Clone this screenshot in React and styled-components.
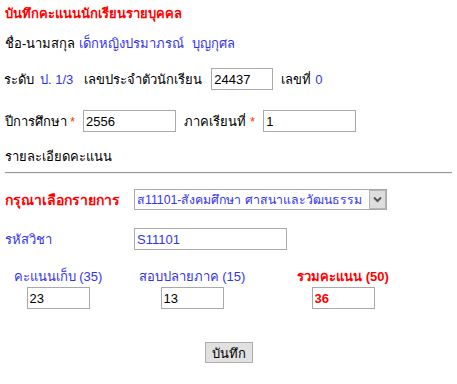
import React from "react";
import styled, { createGlobalStyle } from "styled-components";

const FONT = `Tahoma, "Liberation Sans", "Noto Sans", sans-serif`;
const BLUE = "#3333ee";

const Global = createGlobalStyle`
  html, body { margin: 0; padding: 0; background: #fff; }
  body { font-family: ${FONT}; font-size: 13px; color: #000; }
`;

const Page = styled.div`
  width: 457px;
  height: 384px;
  padding: 0 5px 0 5px;
  box-sizing: border-box;
  display: flex;
  flex-direction: column;
`;

const Title = styled.div`
  color: #ff0000;
  font-weight: bold;
  font-size: 13px;
  height: 26px;
  display: flex;
  align-items: center;
`;

const Row = styled.div`
  display: flex;
  align-items: center;
  height: ${(p) => p.$h || 22}px;
  margin-top: ${(p) => p.$mt || 0}px;
  margin-left: ${(p) => p.$ml || 0}px;
`;

const Label = styled.span`
  color: ${(p) => p.$color || "#000"};
  font-weight: ${(p) => (p.$bold ? "bold" : "normal")};
  font-size: ${(p) => p.$size || 13}px;
  margin-left: ${(p) => p.$ml || 0}px;
  min-width: ${(p) => p.$minw || 0}px;
  white-space: pre;
`;

const Value = styled.span`
  color: ${BLUE};
  margin-left: ${(p) => p.$ml || 0}px;
  white-space: pre;
`;

const Star = styled.span`
  color: #ff3300;
  margin-left: ${(p) => p.$ml || 0}px;
`;

const TextInput = styled.input`
  box-sizing: border-box;
  width: ${(p) => p.$w}px;
  height: 22px;
  border: 1px solid #a9a9a9;
  padding: 0 2px;
  margin: 0 0 0 ${(p) => p.$ml || 0}px;
  font-family: ${FONT};
  font-size: 13px;
  color: ${(p) => p.$color || "#000"};
  font-weight: ${(p) => (p.$bold ? "bold" : "normal")};
  background: #fff;
  outline: none;
`;

const Rule = styled.hr`
  margin: 6px 0 0 0;
  border: none;
  border-top: 1px solid #9a9a9a;
  border-bottom: 1px solid #eeeeee;
  height: 0;
`;

const SelectWrap = styled.div`
  position: relative;
  width: 253px;
  height: 21px;
`;

const Select = styled.select`
  appearance: none;
  box-sizing: border-box;
  width: 100%;
  height: 100%;
  border: 1px solid #a9a9a9;
  padding: 0 2px;
  margin: 0;
  font-family: ${FONT};
  font-size: 12.3px;
  color: ${BLUE};
  background: #fff;
  outline: none;
`;

const ArrowBox = styled.div`
  position: absolute;
  top: 1px;
  right: 1px;
  width: 17px;
  height: 19px;
  box-sizing: border-box;
  background: #dedede;
  border: 1px solid #b4b4b4;
  display: flex;
  align-items: center;
  justify-content: center;
  pointer-events: none;
`;

const ScoreGrid = styled.div`
  display: grid;
  grid-template-columns: 106px 162px 140px;
  margin-top: 18px;
`;

const ScoreCell = styled.div`
  display: flex;
  flex-direction: column;
  align-items: center;
  gap: 1px;
`;

const ScoreLabel = styled.div`
  color: ${(p) => p.$color || BLUE};
  font-weight: ${(p) => (p.$bold ? "bold" : "normal")};
  height: 18px;
  line-height: 18px;
  white-space: pre;
`;

const ButtonRow = styled.div`
  display: flex;
  justify-content: center;
  margin-top: 33px;
`;

const Button = styled.button`
  box-sizing: border-box;
  height: 21px;
  padding: 0 6px;
  background: #e1e1e1;
  border: 1px solid #adadad;
  font-family: ${FONT};
  font-size: 13px;
  color: #000;
`;

export default function App() {
  return (
    <>
      <Global />
      <Page>
        <Title>บันทึกคะแนนนักเรียนรายบุคคล</Title>
        <Row $mt={6}>
          <Label>ชื่อ-นามสกุล</Label>
          <Value $ml={4}>เด็กหญิงปรมาภรณ์  บุญกุศล</Value>
        </Row>
        <Row $mt={14} $ml={-1}>
          <Label>ระดับ</Label>
          <Value $ml={6}>ป. 1/3</Value>
          <Label $ml={11}>เลขประจำตัวนักเรียน</Label>
          <TextInput $ml={9} $w={62} defaultValue="24437" readOnly />
          <Label $ml={8}>เลขที่</Label>
          <Value $ml={4}>0</Value>
        </Row>
        <Row $mt={20}>
          <Label>ปีการศึกษา</Label>
          <Star $ml={3}>*</Star>
          <TextInput $ml={8} $w={93} defaultValue="2556" readOnly />
          <Label $ml={8}>ภาคเรียนที่</Label>
          <Star $ml={4}>*</Star>
          <TextInput $ml={8} $w={93} defaultValue="1" readOnly />
        </Row>
        <Row $mt={14} $h={20}>
          <Label>รายละเอียดคะแนน</Label>
        </Row>
        <Rule />
        <Row $mt={15} $h={21}>
          <Label $color="#ff0000" $bold $size={14} $minw={129}>กรุณาเลือกรายการ</Label>
          <SelectWrap>
            <Select defaultValue="s">
              <option value="s">ส11101-สังคมศึกษา ศาสนาและวัฒนธรรม</option>
            </Select>
            <ArrowBox>
              <svg width="9" height="7" viewBox="0 0 9 7">
                <path d="M1 1.5 L4.5 5 L8 1.5" fill="none" stroke="#555" strokeWidth="2" />
              </svg>
            </ArrowBox>
          </SelectWrap>
        </Row>
        <Row $mt={18} $h={22}>
          <Label $color={BLUE} $minw={129}>รหัสวิชา</Label>
          <TextInput $w={153} defaultValue="S11101" $color={BLUE} readOnly />
        </Row>
        <ScoreGrid>
          <ScoreCell>
            <ScoreLabel>คะแนนเก็บ (35)</ScoreLabel>
            <TextInput $w={63} defaultValue="23" readOnly />
          </ScoreCell>
          <ScoreCell>
            <ScoreLabel>สอบปลายภาค (15)</ScoreLabel>
            <TextInput $w={63} defaultValue="13" readOnly />
          </ScoreCell>
          <ScoreCell>
            <ScoreLabel $color="#ff0000" $bold>รวมคะแนน (50)</ScoreLabel>
            <TextInput $w={63} defaultValue="36" $color="#ff0000" $bold readOnly />
          </ScoreCell>
        </ScoreGrid>
        <ButtonRow>
          <Button>บันทึก</Button>
        </ButtonRow>
      </Page>
    </>
  );
}
